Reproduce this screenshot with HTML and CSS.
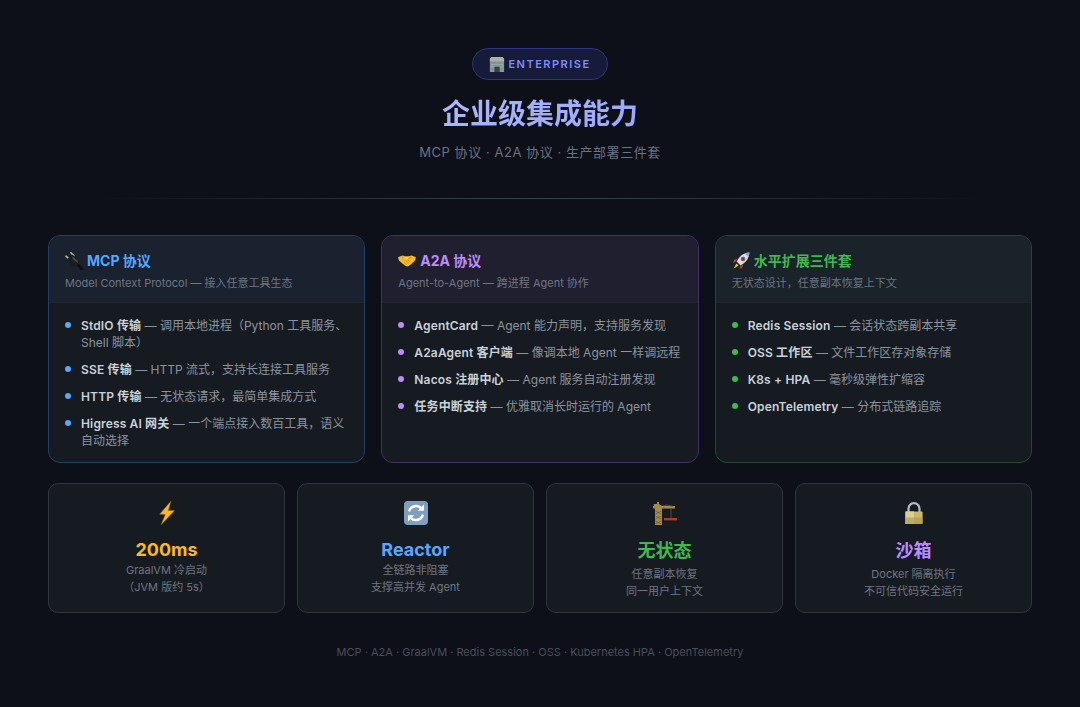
FILE: index.html
```html
<!DOCTYPE html>
<html lang="en">
<head>
    <meta charset="UTF-8">
    <title>企业级集成能力</title>
    <link rel="stylesheet" href="styles.css">
</head>
<body>
    <header class="hero">
        <div class="badge">
            <svg class="badge-icon" viewBox="0 0 18 18"><path d="M1 3l2-2h12l2 2v15H1z" fill="#8f9494"/><path d="M1 3l2-2h12l2 2v3H1z" fill="#aeb0ac"/><path d="M2 7h14v9H2z" fill="#7f9699"/><path d="M2 9.5h14M2 12h14" stroke="#a3b2b2" stroke-width=".8"/><path d="M6 12h6v6H6z" fill="#36423f"/></svg>
            <span>ENTERPRISE</span>
        </div>
        <h1>企业级集成能力</h1>
        <p class="subtitle">MCP 协议 · A2A 协议 · 生产部署三件套</p>
    </header>

    <div class="divider"></div>

    <section class="cards">
        <div class="card card-blue">
            <div class="card-head">
                <h2><svg class="emoji" viewBox="0 0 18 18"><path d="M6 .8l3.2 3.6M1 4.2l3.6 3.2" stroke="#c4bd90" stroke-width="1.6" stroke-linecap="round"/><path d="M7 2.4L14 7l1.4 5.8L12.4 15.6 6.4 13.8 2 7.2z" fill="#1b1e21"/><path d="M7.4 4.6L12.4 8.4l.8 2.8-5.8-4.8z" fill="#4a4f55"/><path d="M13.6 13.6l3 3.6" stroke="#0c0e10" stroke-width="2.4" stroke-linecap="round"/></svg> MCP 协议</h2>
                <p>Model Context Protocol — 接入任意工具生态</p>
            </div>
            <ul class="points">
                <li><span><b>StdIO 传输</b> — 调用本地进程（Python 工具服务、Shell 脚本）</span></li>
                <li><span><b>SSE 传输</b> — HTTP 流式，支持长连接工具服务</span></li>
                <li><span><b>HTTP 传输</b> — 无状态请求，最简单集成方式</span></li>
                <li><span><b>Higress AI 网关</b> — 一个端点接入数百工具，语义自动选择</span></li>
            </ul>
        </div>
        <div class="card card-purple">
            <div class="card-head">
                <h2><svg class="emoji" viewBox="0 0 18 18"><path d="M0 5.2L4.4 3.4 9 4.6 13.6 3.4 18 5.2 17 8.4 13.4 12 10 14.4 7.6 14 4.6 11.8 1 8.4z" fill="#f5bb2a"/><path d="M4.4 5.4L9 4.6l4.4 1-3.4 1.2-1.6 1.6-3-.8zM6 10.4l2.6 2M8 9l2.6 2M10 8l2.4 1.8" stroke="#c98a10" stroke-width=".8" fill="#ffd75e"/></svg> A2A 协议</h2>
                <p>Agent-to-Agent — 跨进程 Agent 协作</p>
            </div>
            <ul class="points">
                <li><span><b>AgentCard</b> — Agent 能力声明，支持服务发现</span></li>
                <li><span><b>A2aAgent 客户端</b> — 像调本地 Agent 一样调远程</span></li>
                <li><span><b>Nacos 注册中心</b> — Agent 服务自动注册发现</span></li>
                <li><span><b>任务中断支持</b> — 优雅取消长时运行的 Agent</span></li>
            </ul>
        </div>
        <div class="card card-green">
            <div class="card-head">
                <h2><svg class="emoji" viewBox="0 0 18 18"><path d="M3.8 9.4L1 11l1-3 3.4-1.6zM8.6 14.2L7 17l3-1 1.6-3.4z" fill="#d6342c"/><path d="M4.4 11.4L1.6 16.4 6.6 13.6z" fill="#f8c52c"/><path d="M3.4 14.6l-1.6 1.6 2.4-1z" fill="#e8702a"/><path d="M17.4.6C13.4.8 9.6 2.6 7 5.8L4.6 9.4l4 4 3.6-2.4c3.2-2.6 5-6.4 5.2-10.4z" fill="#d9dee3"/><path d="M17.4.6c-1.6.1-3 .4-4.4 1l3.4 3.4c.6-1.4.9-2.8 1-4.4z" fill="#7aa6d6"/><circle cx="11" cy="7" r="1.9" fill="#38516e" stroke="#c8312a" stroke-width=".7"/></svg> 水平扩展三件套</h2>
                <p>无状态设计，任意副本恢复上下文</p>
            </div>
            <ul class="points">
                <li><span><b>Redis Session</b> — 会话状态跨副本共享</span></li>
                <li><span><b>OSS 工作区</b> — 文件工作区存对象存储</span></li>
                <li><span><b>K8s + HPA</b> — 毫秒级弹性扩缩容</span></li>
                <li><span><b>OpenTelemetry</b> — 分布式链路追踪</span></li>
            </ul>
        </div>
    </section>

    <section class="stats">
        <div class="stat">
            <svg class="stat-icon" viewBox="0 0 24 24"><path d="M16 0L4.6 13.2l5.6.4L6 24 19.6 9.6l-6.2-.2z" fill="#f7b91f" stroke="#8a5a10" stroke-width=".5"/></svg>
            <div class="stat-value text-yellow">200ms</div>
            <div class="stat-desc">GraalVM 冷启动<br>（JVM 版约 5s）</div>
        </div>
        <div class="stat">
            <svg class="stat-icon" viewBox="0 0 24 24"><rect width="24" height="24" rx="4" fill="#7f9fbd"/><path d="M5 10.4a7.4 7.4 0 0 1 12.4-3.2" fill="none" stroke="#fff" stroke-width="2.4"/><path d="M20 3.6v6.2h-6.2z" fill="#fff"/><path d="M19 13.6a7.4 7.4 0 0 1-12.4 3.2" fill="none" stroke="#fff" stroke-width="2.4"/><path d="M4 20.4v-6.2h6.2z" fill="#fff"/></svg>
            <div class="stat-value text-blue">Reactor</div>
            <div class="stat-desc">全链路非阻塞<br>支撑高并发 Agent</div>
        </div>
        <div class="stat">
            <svg class="stat-icon" viewBox="0 0 24 24"><path d="M1 3h3V1h2v2l3 2h13v2.4h-13V24H2V7.4H0V5h1z" fill="#a8894a"/><path d="M2.4 10l6 3M8.4 10l-6 3M2.4 15l6 3M8.4 15l-6 3M2.4 20l6 3M8.4 20l-6 3M10 5l4-1 6 1.4" stroke="#6e5a30" stroke-width=".8" fill="none"/><path d="M18 7.4V17" stroke="#4a4436" stroke-width="1.2"/><rect x="11" y="17" width="13" height="2.4" fill="#b5372a"/></svg>
            <div class="stat-value stat-value-cjk text-green">无状态</div>
            <div class="stat-desc">任意副本恢复<br>同一用户上下文</div>
        </div>
        <div class="stat">
            <svg class="stat-icon" viewBox="0 0 24 24"><path d="M6.5 11V7.6a5.5 5.5 0 0 1 11 0V11" fill="none" stroke="#aebfc9" stroke-width="2.2"/><rect x="3.4" y="10.4" width="17.2" height="12.6" rx="1" fill="#c9b96e"/><rect x="3.4" y="10.4" width="8.6" height="12.6" fill="#ddd08c"/><rect x="3.4" y="16.4" width="17.2" height="6.6" fill="#a8984f" fill-opacity=".6"/></svg>
            <div class="stat-value stat-value-cjk text-purple">沙箱</div>
            <div class="stat-desc">Docker 隔离执行<br>不可信代码安全运行</div>
        </div>
    </section>

    <footer class="footer">MCP · A2A · GraalVM · Redis Session · OSS · Kubernetes HPA · OpenTelemetry</footer>
</body>
</html>
```

FILE: styles.css
```css
* {
    box-sizing: border-box;
}
body {
    margin: 0;
    padding: 48px;
    background-color: #0d1018;
    color: #c9d1d9;
    font-family: Inter, "Noto Sans CJK SC", sans-serif;
}
.hero {
    text-align: center;
}
.badge {
    display: inline-flex;
    align-items: center;
    gap: 3px;
    height: 32px;
    padding: 0 16px;
    border: 1px solid #2f3480;
    border-radius: 16px;
    background-color: #171b3a;
    color: #818cf8;
    font-size: 11px;
    font-weight: 600;
    letter-spacing: 1.5px;
}
.badge-icon {
    width: 16px;
    height: 16px;
}
h1 {
    margin: 12px 0 0;
    font-size: 28px;
    font-weight: 700;
    background: linear-gradient(135deg, #c7d2fe, #818cf8);
    -webkit-background-clip: text;
    background-clip: text;
    color: transparent;
}
.subtitle {
    margin: 10px 0 0;
    font-size: 13px;
    color: #6b7280;
    letter-spacing: 0.55px;
}
.divider {
    height: 1px;
    margin: 37px 0 36px;
    background: linear-gradient(90deg, transparent 5%, #3d434d, transparent 95%);
}
.cards {
    display: grid;
    grid-template-columns: repeat(3, 1fr);
    gap: 16px;
}
.card {
    border: 1px solid #30363d;
    border-radius: 12px;
    background-color: #161b22;
    overflow: hidden;
}
.card-head {
    height: 67px;
    padding: 15px 16px 0;
    border-bottom: 1px solid #21262d;
}
.card-head h2 {
    display: flex;
    align-items: center;
    gap: 4px;
    margin: 0;
    font-size: 14px;
    font-weight: 700;
    line-height: 20px;
}
.card-head p {
    margin: 4px 0 0;
    font-size: 11px;
    line-height: 16px;
    color: #6e7681;
}
.emoji {
    width: 18px;
    height: 18px;
    flex-shrink: 0;
}
.points {
    display: flex;
    flex-direction: column;
    gap: 10px;
    margin: 0;
    padding: 14px 16px 13px;
    list-style-type: none;
}
.points li {
    display: flex;
    gap: 10px;
    font-size: 12px;
    line-height: 17px;
    color: #8b949e;
}
.points li::before {
    content: "";
    flex-shrink: 0;
    width: 6px;
    height: 6px;
    margin-top: 5px;
    border-radius: 50%;
    background-color: #58a6ff;
}
.points b {
    font-weight: 600;
    color: #c9d1d9;
    letter-spacing: 0.15px;
}
.card-blue {
    border-color: #1f4068;
}
.card-blue .card-head {
    background-color: #1a2230;
}
.card-blue h2 {
    color: #58a6ff;
}
.card-purple {
    border-color: #41306b;
}
.card-purple .card-head {
    background-color: #201f30;
}
.card-purple h2 {
    color: #bc8cff;
}
.card-purple .points li::before {
    background-color: #bc8cff;
}
.card-green {
    border-color: #24482e;
}
.card-green .card-head {
    background-color: #192329;
}
.card-green h2 {
    color: #3fb950;
}
.card-green .points li::before {
    background-color: #3fb950;
}
.stats {
    display: grid;
    grid-template-columns: repeat(4, 1fr);
    gap: 12px;
    margin-top: 20px;
}
.stat {
    padding: 16px 16px 13px;
    border: 1px solid #30363d;
    border-radius: 10px;
    background-color: #161b22;
    text-align: center;
}
.stat-icon {
    display: block;
    width: 24px;
    height: 24px;
    margin: 1px auto 0;
}
.stat-value {
    margin-top: 14px;
    font-size: 18px;
    font-weight: 700;
}
.stat-value-cjk {
    margin: 11px 0 4px;
}
.stat-desc {
    margin-top: 2px;
    font-size: 11px;
    line-height: 1.5;
    color: #6e7681;
}
.text-yellow {
    color: #fbb924;
}
.text-blue {
    color: #58a6ff;
}
.text-green {
    color: #3fb950;
}
.text-purple {
    color: #bc8cff;
}
.footer {
    margin-top: 32px;
    font-size: 11px;
    line-height: 14px;
    color: #484f58;
    text-align: center;
}
```
